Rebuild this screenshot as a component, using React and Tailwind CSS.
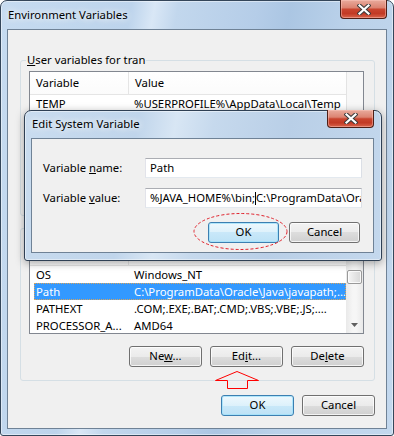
import React from "react";

function CloseBtn({ cls }) {
  return (
    <div
      className={
        "flex w-[47px] shrink-0 items-center justify-center rounded-b-[4px] border border-t-0 border-[#4e1f17] bg-[linear-gradient(to_bottom,#e9ab9d_0%,#dc8472_42%,#c9452f_52%,#c23a25_75%,#d9654c_100%)] shadow-[inset_0_0_0_1px_rgba(255,205,195,0.45)] " +
        cls
      }
    >
      <svg width="14" height="11" viewBox="0 0 14 11">
        <path d="M2.5 1.5 L11.5 9.5 M11.5 1.5 L2.5 9.5" stroke="#3b3b3b" strokeWidth="4.2" strokeLinecap="square" />
        <path d="M2.5 1.5 L11.5 9.5 M11.5 1.5 L2.5 9.5" stroke="#ffffff" strokeWidth="2.2" strokeLinecap="square" />
      </svg>
    </div>
  );
}

const btn =
  "flex h-[21px] w-[73px] shrink-0 items-center justify-center rounded-[3px] border border-[#707070] bg-[linear-gradient(to_bottom,#f3f3f3_0%,#ebebeb_50%,#dddddd_50%,#d0d0d0_100%)] shadow-[inset_0_0_0_1px_rgba(255,255,255,0.75)] pb-[1px]";
const btnDefault =
  "flex h-[21px] w-[73px] shrink-0 items-center justify-center rounded-[3px] border border-[#3c7fb1] bg-[linear-gradient(to_bottom,#eef8fd_0%,#ddf1fb_50%,#c9e8f9_50%,#bde2f6_100%)] shadow-[inset_0_0_0_1px_rgba(160,225,250,0.8)] pb-[1px]";
const btnSmall =
  "flex h-[21px] w-[71px] shrink-0 items-center justify-center rounded-[3px] border border-[#707070] bg-[linear-gradient(to_bottom,#f3f3f3_0%,#ebebeb_50%,#dddddd_50%,#d0d0d0_100%)] shadow-[inset_0_0_0_1px_rgba(255,255,255,0.75)] pb-[1px]";
const btnSmallDefault =
  "flex h-[21px] w-[71px] shrink-0 items-center justify-center rounded-[3px] border border-[#3c7fb1] bg-[linear-gradient(to_bottom,#eef8fd_0%,#ddf1fb_50%,#c9e8f9_50%,#bde2f6_100%)] shadow-[inset_0_0_0_1px_rgba(160,225,250,0.8)] pb-[1px]";

const input =
  "flex h-[20px] w-[217px] shrink-0 items-center overflow-hidden whitespace-nowrap border border-[#abadb3] border-b-[#e3e9ef] border-l-[#e2e3ea] border-r-[#dbdfe6] bg-white pl-[4px]";

function Header() {
  return (
    <div className="flex h-[23px] shrink-0 items-center border-b border-[#e5e5e5] bg-[linear-gradient(to_bottom,#ffffff,#fbfbfb)]">
      <div className="flex h-full w-[99px] items-center border-r border-[#e5e5e5] pl-[6px]">Variable</div>
      <div className="flex h-full flex-1 items-center pl-[6px]">Value</div>
    </div>
  );
}

function Row({ name, value, selected }) {
  return (
    <div className="flex h-[17px] shrink-0 pl-[4px]">
      <div
        className={
          selected
            ? "flex min-w-0 flex-1 items-center whitespace-nowrap border border-dotted border-[#d9a45c] bg-[#3399ff] text-white"
            : "flex min-w-0 flex-1 items-center whitespace-nowrap border border-transparent"
        }
      >
        <div className="w-[94px] shrink-0 overflow-hidden pl-[1px]">{name}</div>
        <div className="min-w-0 flex-1 overflow-hidden pl-[5px]">{value}</div>
      </div>
    </div>
  );
}

export default function App() {
  return (
    <div className="relative h-[436px] w-[394px] overflow-hidden bg-white font-['Noto_Sans',sans-serif] text-[11.3px] leading-[16px] text-black">
      {/* Main window */}
      <div className="flex h-full w-full flex-col rounded-t-[7px] rounded-b-[3px] border border-[#34465a] bg-[linear-gradient(100deg,#c6dbf0_0%,#bdd4ec_28%,#d9e7f6_33%,#c2d7ed_38%,#b5cde8_55%,#abc6e3_62%,#bbd2ea_75%,#c3d8ee_100%)] px-[6px] pb-[6px] shadow-[inset_0_0_0_1px_rgba(255,255,255,0.45)]">
        <div className="flex h-[28px] shrink-0 items-start justify-between">
          <span className="ml-[1px] mt-[6px] [text-shadow:0_0_6px_#ffffff,0_0_10px_rgba(255,255,255,0.8)]">
            Environment Variables
          </span>
          <CloseBtn cls="-mt-px h-[19px]" />
        </div>

        <div className="flex min-w-0 flex-1 flex-col border border-[#6f8296] bg-[#f0f0f0]">
          {/* User variables */}
          <fieldset className="ml-[12px] mr-[11px] mt-[22px] min-w-0 rounded-[3px] border border-[#d5dfe5]">
            <legend className="ml-[5px] px-[1px] leading-[16px]">
              <span className="underline">U</span>ser variables for tran
            </legend>
            <div className="pb-[13px] pl-[8px] pr-[10px] pt-[3px]">
              <div className="flex h-[100px] border border-[#828790] bg-white">
                <div className="flex min-w-0 flex-1 flex-col overflow-hidden">
                  <Header />
                  <Row name="TEMP" value="%USERPROFILE%\AppData\Local\Temp" />
                  <Row name="TMP" value="%USERPROFILE%\AppData\Local\Temp" />
                </div>
                <div className="w-[17px] shrink-0 border-l border-[#e3e3e3] bg-[#f7f7f7]" />
              </div>
              <div className="mt-[10px] flex justify-end gap-[8px]">
                <div className={btn}>New...</div>
                <div className={btn}>Edit...</div>
                <div className={btn}>Delete</div>
              </div>
            </div>
          </fieldset>

          {/* System variables */}
          <fieldset className="ml-[12px] mr-[11px] mt-[4px] min-w-0 rounded-[3px] border border-[#d5dfe5]">
            <legend className="ml-[5px] px-[1px] leading-[16px]">
              <span className="underline">S</span>ystem variables
            </legend>
            <div className="pb-[13px] pl-[8px] pr-[10px] pt-[6px]">
              <div className="flex h-[92px] border border-[#828790] bg-white">
                <div className="flex min-w-0 flex-1 flex-col overflow-hidden">
                  <Header />
                  <Row name="OS" value="Windows_NT" />
                  <Row name="Path" value="C:\ProgramData\Oracle\Java\javapath;..." selected />
                  <Row name="PATHEXT" value=".COM;.EXE;.BAT;.CMD;.VBS;.VBE;.JS;...." />
                  <Row name="PROCESSOR_A..." value="AMD64" />
                </div>
                <div className="flex w-[17px] shrink-0 flex-col bg-[linear-gradient(to_right,#e9e9e9,#f6f6f6_40%,#f6f6f6_60%,#e9e9e9)]">
                  <div className="h-[17px]" />
                  <div className="h-[10px]" />
                  <div className="mx-[1px] h-[14px] rounded-[2px] border border-[#9a9a9a] bg-[linear-gradient(to_right,#f6f6f6,#e6e6e6_50%,#d8d8d8)] shadow-[inset_0_0_0_1px_rgba(255,255,255,0.8)]" />
                  <div className="flex-1" />
                  <div className="flex h-[17px] items-center justify-center">
                    <svg width="7" height="4" viewBox="0 0 7 4">
                      <path d="M0 0 L7 0 L3.5 4 Z" fill="#606060" />
                    </svg>
                  </div>
                </div>
              </div>
              <div className="mt-[12px] flex justify-end gap-[8px]">
                <div className={btn}>
                  <span>
                    Ne<span className="underline">w</span>...
                  </span>
                </div>
                <div className={btn}>
                  <span>
                    Ed<span className="underline">i</span>t...
                  </span>
                </div>
                <div className={btn}>
                  <span>
                    De<span className="underline">l</span>ete
                  </span>
                </div>
              </div>
            </div>
          </fieldset>

          <div className="mr-[11px] mt-[14px] flex justify-end gap-[8px]">
            <div className={btnDefault}>OK</div>
            <div className={btn}>Cancel</div>
          </div>
        </div>
      </div>

      {/* Edit System Variable dialog (overlapping window) */}
      <div className="absolute left-[24px] top-[110px] flex h-[151px] w-[358px] flex-col rounded-t-[7px] rounded-b-[3px] border border-[#2f4054] bg-[linear-gradient(100deg,#c9dcef_0%,#c0d5eb_30%,#d8e6f4_40%,#c6d9ed_50%,#b9cfe7_70%,#c4d8ed_100%)] pb-[7px] pl-[6px] pr-[7px] shadow-[0_2px_8px_rgba(0,0,0,0.35),inset_0_0_0_1px_rgba(255,255,255,0.45)]">
        <div className="flex h-[27px] shrink-0 items-start justify-between">
          <span className="ml-[1px] mt-[5px] [text-shadow:0_0_6px_#ffffff,0_0_10px_rgba(255,255,255,0.8)]">
            Edit System Variable
          </span>
          <CloseBtn cls="-mt-px h-[18px]" />
        </div>
        <div className="flex min-w-0 flex-1 flex-col border border-[#6f8296] bg-[#f0f0f0] pl-[11px] pr-[11px] pt-[19px]">
          <div className="flex items-center justify-between">
            <span>
              Variable <span className="underline">n</span>ame:
            </span>
            <div className={input}>Path</div>
          </div>
          <div className="mt-[10px] flex items-center justify-between">
            <span>
              Variable <span className="underline">v</span>alue:
            </span>
            <div className={input}>
              <span>%JAVA_HOME%\bin;</span>
              <span className="inline-block h-[13px] w-px shrink-0 bg-black" />
              <span>C:\ProgramData\Oracle\Java\javapath</span>
            </div>
          </div>
          <div className="mt-[14px] flex justify-end gap-[10px] pr-[2px]">
            <div className={btnSmallDefault}>OK</div>
            <div className={btnSmall}>Cancel</div>
          </div>
        </div>
      </div>

      {/* Red annotations */}
      <svg className="absolute left-[192px] top-[211px]" width="98" height="42" viewBox="0 0 98 42">
        <ellipse cx="48.5" cy="20.5" rx="46.5" ry="18" fill="none" stroke="#e0202a" strokeWidth="1" strokeDasharray="3 2" />
      </svg>
      <svg className="absolute left-[213px] top-[369px]" width="48" height="22" viewBox="0 0 48 22">
        <polygon
          points="24,2.5 45.5,11.5 34.5,11.5 34.5,19.5 14.5,19.5 14.5,11.5 2.5,11.5"
          fill="none"
          stroke="#ff0000"
          strokeWidth="1"
        />
      </svg>
    </div>
  );
}
